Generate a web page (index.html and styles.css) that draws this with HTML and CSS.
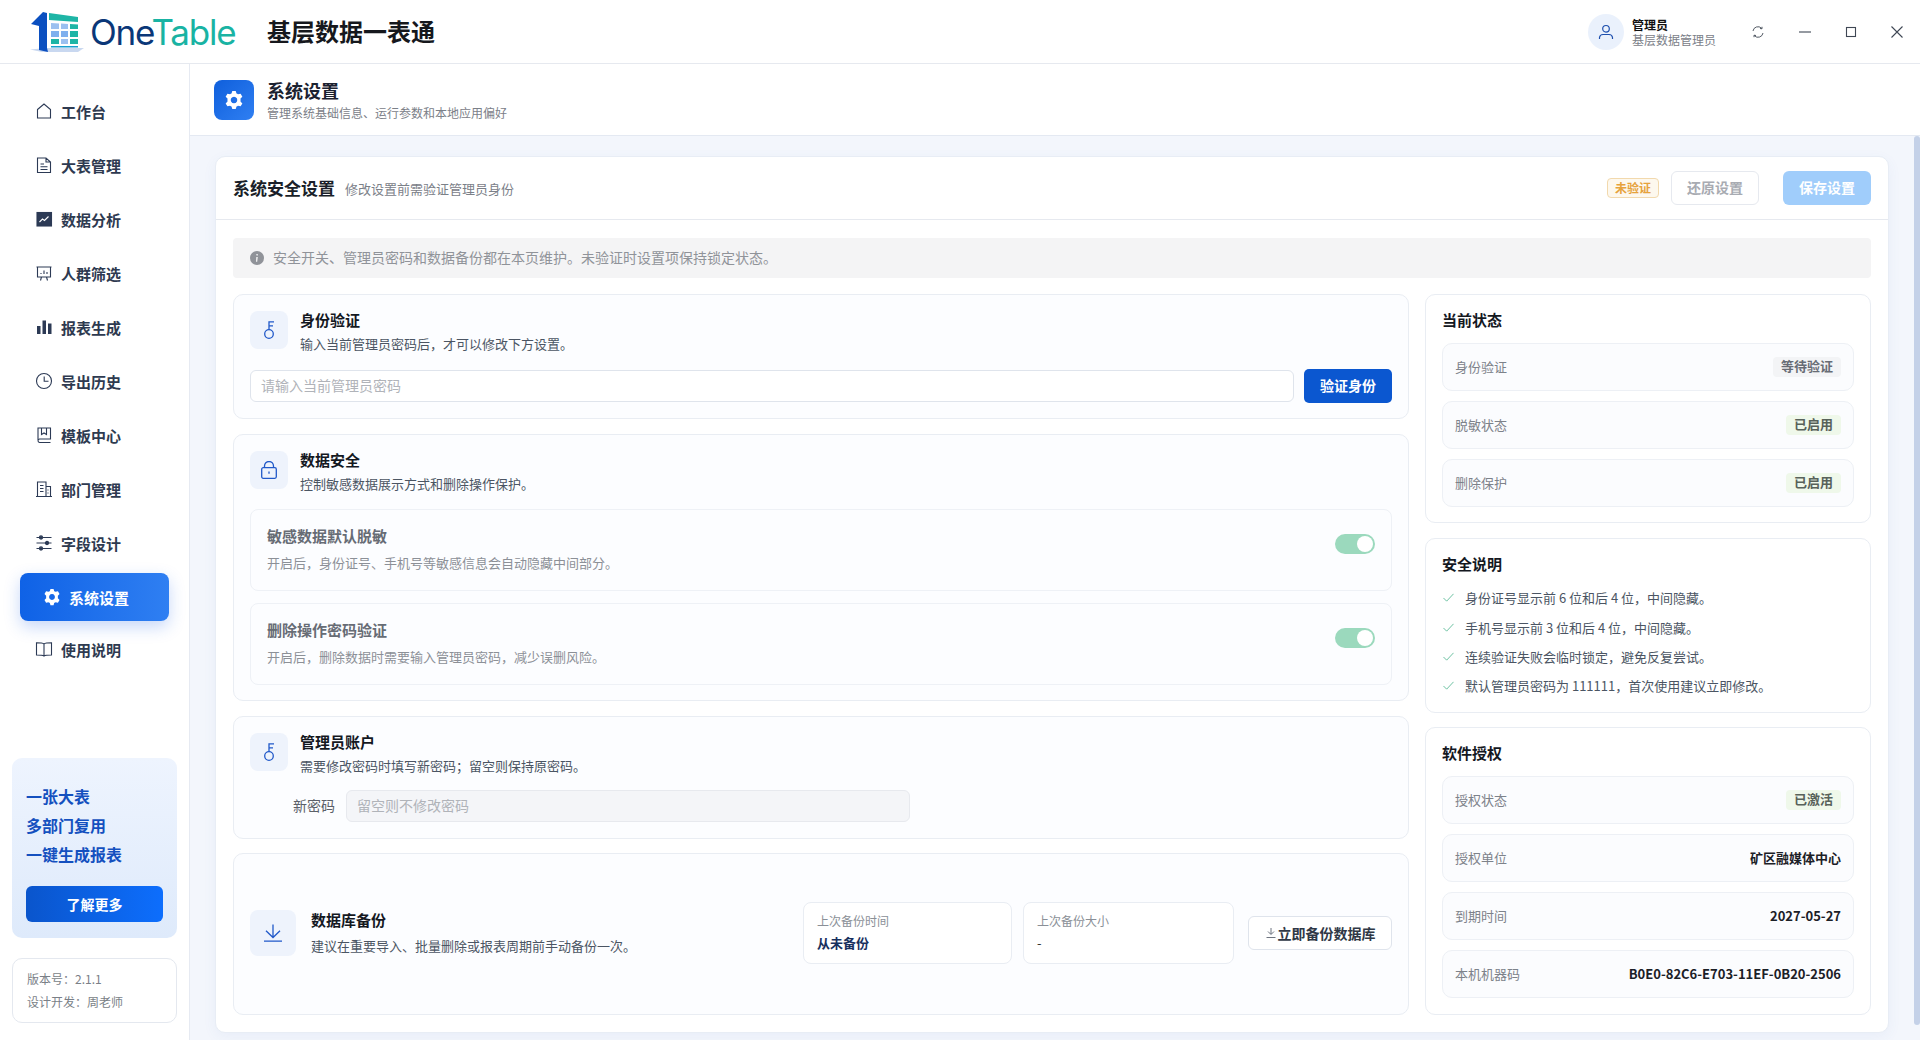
FILE: index.html
```html
<!DOCTYPE html>
<html lang="zh-CN">
<head>
<meta charset="utf-8">
<title>OneTable 基层数据一表通</title>
<link rel="stylesheet" href="styles.css">
</head>
<body>
<header class="topbar">
  <div class="brand">
    <svg class="logo" viewBox="0 0 54 42" aria-hidden="true">
      <path d="M0 38.500 L12 41 L48 41 L54 37 L17 37 Z" fill="#c9d8f0"/>
      <path d="M1 13 L10 4 L13 1 L17 2 L17 37 L18 41 L9 39 L9 15 Z" fill="#0b4fc0"/>
      <path d="M19 2 L48 6 L48 11 L19 9 Z" fill="#1eb5a6"/>
      <path d="M21 12 L29 12.500 L29 18 L21 18 Z M31 12.500 L38 13 L38 18 L31 18 Z" fill="#9cc0f0"/>
      <path d="M40 13 L48 13.500 L48 18 L40 18 Z" fill="#1eb5a6"/>
      <path d="M21 20 L29 20 L29 26 L21 26 Z M31 20 L38 20 L38 26 L31 26 Z" fill="#7fb0ee"/>
      <path d="M40 20 L48 20 L48 26 L40 26 Z" fill="#1eb5a6"/>
      <path d="M21 28 L29 28 L29 33 L21 33 Z M40 28 L48 28 L48 33 L40 33 Z" fill="#1eb5a6"/>
      <path d="M31 28 L38 28 L38 33 L31 33 Z" fill="#9cc0f0"/>
      <path d="M21 35 L48 35 L48 36.500 L21 36.500 Z" fill="#1a9fd0"/>
    </svg>
    <span class="wordmark"><span class="wm-one">One</span><span class="wm-table">Table</span></span>
  </div>
  <h1 class="app-name">基层数据一表通</h1>
  <div class="top-right">
    <div class="avatar">
      <svg viewBox="0 0 16 16" class="ic-user"><circle cx="8" cy="4.800" r="3.300"/><path d="M1.500 15 V13.500 A3.500 3.500 0 0 1 5 10.500 H11 A3.500 3.500 0 0 1 14.500 13.500 V15"/></svg>
    </div>
    <div class="user-text">
      <div class="user-name">管理员</div>
      <div class="user-role">基层数据管理员</div>
    </div>
    <div class="win-btns">
      <svg viewBox="0 0 12 12" class="win win-sm"><path d="M1 5 A5 5 0 0 1 9.500 2.200 M11 7 A5 5 0 0 1 2.500 9.800"/><path d="M8 2.500 L10 2.800 L10 .8 M4 9.500 L2 9.200 L2 11.200"/></svg>
      <svg viewBox="0 0 14 14" class="win"><path d="M1 7 H13"/></svg>
      <svg viewBox="0 0 14 14" class="win win-m"><rect x="2.500" y="2.500" width="9" height="9"/></svg>
      <svg viewBox="0 0 14 14" class="win"><path d="M1.500 1.500 L12.500 12.500 M12.500 1.500 L1.500 12.500"/></svg>
    </div>
  </div>
</header>

<div class="shell">
  <aside class="sidebar">
    <nav class="nav">
      <a class="nav-item"><svg viewBox="0 0 18 18" class="ni"><path d="M2.500 7.500 L9 2 L15.500 7.500 V16 H2.500 Z"/></svg><span>工作台</span></a>
      <a class="nav-item"><svg viewBox="0 0 18 18" class="ni"><path d="M2.500 2 H11 L15.500 6 V16.500 H2.500 Z M11 2 V6 H15.500 M5.500 8 H9 M5.500 10.800 H12.500 M5.500 13.500 H12.500"/></svg><span>大表管理</span></a>
      <a class="nav-item"><svg viewBox="0 0 18 18" class="ni"><rect x="2" y="2.500" width="14.500" height="13.500" fill="#2c3a55"/><path d="M4.500 12 L7.500 9 L9.500 10.500 L13.500 6.500" stroke="#fff"/></svg><span>数据分析</span></a>
      <a class="nav-item"><svg viewBox="0 0 18 18" class="ni"><path d="M1.500 3 H16.500 M2.500 3 V13 H15.500 V3 M6.500 13 L5.500 16.500 M11.500 13 L12.500 16.500 M6 10 V9 M9 10 V6.500 M12 10 V8"/></svg><span>人群筛选</span></a>
      <a class="nav-item"><svg viewBox="0 0 18 18" class="ni ni-fill"><rect x="2" y="8" width="3.500" height="8"/><rect x="7.500" y="2.500" width="3.500" height="13.500"/><rect x="13" y="5.500" width="3.500" height="10.500"/></svg><span>报表生成</span></a>
      <a class="nav-item"><svg viewBox="0 0 18 18" class="ni"><circle cx="9" cy="9" r="7.500"/><path d="M9.200 4.500 V9.200 H13.500"/></svg><span>导出历史</span></a>
      <a class="nav-item"><svg viewBox="0 0 18 18" class="ni"><path d="M3 14 V2 H15.500 V13 H4.500 A1.800 1.800 0 0 0 3 14.800 A1.800 1.800 0 0 0 4.500 16.500 H15.500 M6.500 2 V8.500 L9 7 L11.500 8.500 V2"/></svg><span>模板中心</span></a>
      <a class="nav-item"><svg viewBox="0 0 18 18" class="ni"><path d="M1 16.500 H17 M2.500 16.500 V2 H11 V16.500 M11 6.500 H15.500 V16.500 M5 5.500 H8.500 M5 8.500 H8.500 M5 11.500 H8.500 M13 9.500 V10.500 M13 12.500 V13.500"/></svg><span>部门管理</span></a>
      <a class="nav-item"><svg viewBox="0 0 18 18" class="ni"><path d="M1.500 3.500 H16.500 M1.500 9 H16.500 M1.500 14.500 H16.500"/><circle cx="6" cy="3.500" r="1.600" fill="#2c3a55"/><circle cx="12" cy="9" r="1.600" fill="#2c3a55"/><circle cx="6" cy="14.500" r="1.600" fill="#2c3a55"/></svg><span>字段设计</span></a>
      <a class="nav-item nav-active"><svg viewBox="0 0 1024 1024" class="gear gear-w"><path fill-rule="evenodd" d="M600 50 L640 180 Q680 195 715 220 L850 190 L940 340 L845 440 Q850 512 845 585 L940 685 L850 835 L715 805 Q680 830 640 845 L600 975 H425 L385 845 Q345 830 310 805 L175 835 L85 685 L180 585 Q175 512 180 440 L85 340 L175 190 L310 220 Q345 195 385 180 L425 50 Z M512 345 A167 167 0 1 0 512.100 345 Z"/></svg><span>系统设置</span></a>
      <a class="nav-item"><svg viewBox="0 0 18 18" class="ni"><path d="M9 4 V16 M9 4 C7.500 2.800 4 2.800 1.500 2.800 V15 C4 15 7.500 15 9 16 C10.500 15 14 15 16.500 15 V2.800 C14 2.800 10.500 2.800 9 4 Z"/></svg><span>使用说明</span></a>
    </nav>
    <section class="promo">
      <p>一张大表</p>
      <p>多部门复用</p>
      <p>一键生成报表</p>
      <button class="promo-btn">了解更多</button>
    </section>
    <section class="version">
      <p>版本号：2.1.1</p>
      <p>设计开发：周老师</p>
    </section>
  </aside>

  <main class="main">
    <div class="page-head">
      <div class="page-icon"><svg viewBox="0 0 1024 1024" class="gear gear-p"><path fill-rule="evenodd" d="M600 50 L640 180 Q680 195 715 220 L850 190 L940 340 L845 440 Q850 512 845 585 L940 685 L850 835 L715 805 Q680 830 640 845 L600 975 H425 L385 845 Q345 830 310 805 L175 835 L85 685 L180 585 Q175 512 180 440 L85 340 L175 190 L310 220 Q345 195 385 180 L425 50 Z M512 345 A167 167 0 1 0 512.100 345 Z"/></svg></div>
      <div>
        <div class="page-title">系统设置</div>
        <div class="page-sub">管理系统基础信息、运行参数和本地应用偏好</div>
      </div>
    </div>

    <div class="scroll">
      <div class="card">
        <div class="card-head">
          <span class="card-title">系统安全设置</span>
          <span class="card-sub">修改设置前需验证管理员身份</span>
          <span class="tag-warn">未验证</span>
          <button class="btn-restore">还原设置</button>
          <button class="btn-save">保存设置</button>
        </div>
        <div class="card-body">
          <div class="alert">
            <svg viewBox="0 0 14 14" class="alert-ic"><circle cx="7" cy="7" r="7"/><path d="M7.700 3 L7.900 4.400 L6.500 4.500 L6.300 3.100 Z M6.300 6 H7.800 L7.200 10.800 H6 Z" fill="#f4f4f5"/></svg>
            <span>安全开关、管理员密码和数据备份都在本页维护。未验证时设置项保持锁定状态。</span>
          </div>
          <div class="grid">
            <div class="col col-left">
              <section class="panel">
                <div class="p-head">
                  <div class="p-icon"><svg viewBox="0 0 18 18" class="pi"><circle cx="9" cy="13" r="4.300"/><path d="M9 8.700 V.8 H14 M9 4.800 H13"/></svg></div>
                  <div><h3>身份验证</h3><p>输入当前管理员密码后，才可以修改下方设置。</p></div>
                </div>
                <div class="verify-row">
                  <input class="input" placeholder="请输入当前管理员密码">
                  <button class="btn-primary">验证身份</button>
                </div>
              </section>

              <section class="panel">
                <div class="p-head">
                  <div class="p-icon"><svg viewBox="0 0 18 18" class="pi"><rect x="1.700" y="6.700" width="14.600" height="10.600" rx="1.500"/><path d="M4.500 6.700 V5 A4.500 4.500 0 0 1 13.500 5 V6.700 M9 10.500 V12.800"/></svg></div>
                  <div><h3>数据安全</h3><p>控制敏感数据展示方式和删除操作保护。</p></div>
                </div>
                <div class="switch-list">
                  <div class="switch-row">
                    <div><h4>敏感数据默认脱敏</h4><p>开启后，身份证号、手机号等敏感信息会自动隐藏中间部分。</p></div>
                    <span class="toggle"></span>
                  </div>
                  <div class="switch-row">
                    <div><h4>删除操作密码验证</h4><p>开启后，删除数据时需要输入管理员密码，减少误删风险。</p></div>
                    <span class="toggle"></span>
                  </div>
                </div>
              </section>

              <section class="panel panel-admin">
                <div class="p-head">
                  <div class="p-icon"><svg viewBox="0 0 18 18" class="pi"><circle cx="9" cy="13" r="4.300"/><path d="M9 8.700 V.8 H14 M9 4.800 H13"/></svg></div>
                  <div><h3>管理员账户</h3><p>需要修改密码时填写新密码；留空则保持原密码。</p></div>
                </div>
                <div class="pwd-row">
                  <label>新密码</label>
                  <input class="input input-off" placeholder="留空则不修改密码" disabled>
                </div>
              </section>

              <section class="panel panel-backup">
                <div class="p-icon p-icon-lg"><svg viewBox="0 0 18 18" class="pi"><path d="M9 .5 V13 M2 6.800 L9 13.500 L16 6.800 M0 17.200 H18"/></svg></div>
                <div class="backup-text"><h3>数据库备份</h3><p>建议在重要导入、批量删除或报表周期前手动备份一次。</p></div>
                <div class="stat"><span>上次备份时间</span><b>从未备份</b></div>
                <div class="stat"><span>上次备份大小</span><b class="plain">-</b></div>
                <button class="btn-backup"><svg viewBox="0 0 12 12" class="bi"><path d="M6 1 V7 M3 4.500 L6 7.500 L9 4.500 M1.500 10.500 H10.500"/></svg>立即备份数据库</button>
              </section>
            </div>

            <div class="col col-right">
              <section class="panel">
                <h3 class="side-title">当前状态</h3>
                <div class="rows">
                  <div class="row"><span>身份验证</span><em class="tag tag-gray">等待验证</em></div>
                  <div class="row"><span>脱敏状态</span><em class="tag tag-green">已启用</em></div>
                  <div class="row"><span>删除保护</span><em class="tag tag-green">已启用</em></div>
                </div>
              </section>
              <section class="panel panel-note">
                <h3 class="side-title">安全说明</h3>
                <ul class="notes">
                  <li><svg viewBox="0 0 12 12" class="check"><path d="M.5 6.500 L4 10 L11.500 2"/></svg>身份证号显示前 6 位和后 4 位，中间隐藏。</li>
                  <li><svg viewBox="0 0 12 12" class="check"><path d="M.5 6.500 L4 10 L11.500 2"/></svg>手机号显示前 3 位和后 4 位，中间隐藏。</li>
                  <li><svg viewBox="0 0 12 12" class="check"><path d="M.5 6.500 L4 10 L11.500 2"/></svg>连续验证失败会临时锁定，避免反复尝试。</li>
                  <li><svg viewBox="0 0 12 12" class="check"><path d="M.5 6.500 L4 10 L11.500 2"/></svg>默认管理员密码为 111111，首次使用建议立即修改。</li>
                </ul>
              </section>
              <section class="panel panel-license">
                <h3 class="side-title">软件授权</h3>
                <div class="rows">
                  <div class="row"><span>授权状态</span><em class="tag tag-green">已激活</em></div>
                  <div class="row"><span>授权单位</span><strong>矿区融媒体中心</strong></div>
                  <div class="row"><span>到期时间</span><strong>2027-05-27</strong></div>
                  <div class="row"><span>本机机器码</span><strong>B0E0-82C6-E703-11EF-0B20-2506</strong></div>
                </div>
              </section>
            </div>
          </div>
        </div>
      </div>
    </div>
    <div class="scroll-thumb"></div>
  </main>
</div>
</body>
</html>
```

FILE: styles.css
```css
* { box-sizing: border-box; }
html, body { height: 100%; }
body {
  margin: 0;
  height: 1040px;
  overflow: hidden;
  display: flex;
  flex-direction: column;
  background: #fff;
  color: #1f2937;
  font-family: "Noto Sans CJK SC", "Noto Sans", sans-serif;
  font-size: 13px;
}
h1, h3, h4, p, ul { margin: 0; padding: 0; }
button { font-family: inherit; cursor: pointer; }
em { font-style: normal; }

/* top bar */
.topbar {
  flex: 0 0 64px;
  display: flex;
  align-items: center;
  border-bottom: 1px solid #e6e9ef;
  background: #fff;
  padding-left: 30px;
}
.brand { display: flex; align-items: center; width: 237px; }
.logo { width: 54px; height: 42px; flex: none; margin-top: 1px; }
.wordmark { font-family: Inter, sans-serif; font-size: 35px; font-weight: 400; letter-spacing: -1.200px; margin-left: 6px; line-height: 1; margin-top: 2px; }
.wm-one { color: #0a3778; }
.wm-table { color: #19b3a3; }
.app-name { font-size: 24px; font-weight: 700; color: #16181d; line-height: 1; margin-top: -2px; }
.top-right { margin-left: auto; display: flex; align-items: center; }
.avatar {
  width: 36px; height: 36px; border-radius: 50%;
  background: #eaf1fc;
  display: flex; align-items: center; justify-content: center;
}
.ic-user { width: 16px; height: 16px; fill: none; stroke: #1d4fae; stroke-width: 1.200; }
.user-text { margin-left: 8px; width: 120px; line-height: 15px; font-size: 12px; }
.user-name { font-weight: 600; color: #111; }
.user-role { color: #7b8088; }
.win-btns { display: flex; align-items: center; }
.win { width: 14px; height: 14px; fill: none; stroke: #3f4754; stroke-width: 1.100; margin-left: 32px; }
.win:last-child { margin-right: 16px; }
.win-sm { width: 12px; height: 12px; margin-left: 0; margin-right: 2px; stroke-width: .9; }
.win-m { width: 14px; height: 14px; }

/* shell */
.shell { flex: 1; display: flex; min-height: 0; }
.sidebar {
  flex: 0 0 190px;
  display: flex;
  flex-direction: column;
  border-right: 1px solid #e6eaf2;
  background: #fff;
  padding: 25px 12px 17px;
}
.nav { display: flex; flex-direction: column; gap: 10px; margin: 0 8px; }
.nav-item {
  height: 44px;
  display: flex; align-items: center; gap: 8px;
  padding-left: 15px;
  font-size: 15px; font-weight: 600; color: #2e3a50;
  border-radius: 8px;
}
.ni { width: 18px; height: 18px; fill: none; stroke: #2c3a55; stroke-width: 1.100; flex: none; }
.ni-fill { fill: #2c3a55; stroke: none; }
.gear { flex: none; }
.gear-w { width: 18px; height: 18px; fill: #fff; }
.gear-p { width: 20px; height: 20px; fill: #fff; }
.nav-active {
  height: 48px;
  margin: -2px 0 -4px;
  padding-left: 23px;
  color: #fff;
  background: linear-gradient(90deg, #0f62e6, #2f7ff2);
  box-shadow: 0 6px 16px rgba(30, 100, 230, .25);
}
.promo {
  margin-top: auto;
  height: 180px;
  border-radius: 10px;
  padding: 24px 14px 0;
  background: linear-gradient(180deg, #eef4fe, #deeafb);
  font-size: 16px; font-weight: 700; color: #1450bf;
}
.promo p { line-height: 29px; }
.promo-btn {
  display: block; width: 137px; height: 36px; margin-top: 17px;
  border: 0; border-radius: 6px;
  background: linear-gradient(90deg, #0a55cc, #0d6efd);
  color: #fff; font-size: 14px; font-weight: 700;
}
.version {
  margin-top: 20px; height: 65px;
  border: 1px solid #e4e8ef; border-radius: 10px;
  padding: 8px 14px;
  color: #7a7f87; font-size: 12px; line-height: 23px;
}

/* main */
.main { position: relative; flex: 1; min-width: 0; display: flex; flex-direction: column; background: #f3f6fc; }
.page-head {
  flex: 0 0 72px;
  display: flex; align-items: center; gap: 13px;
  padding-left: 24px;
  background: #fff;
  border-bottom: 1px solid #e4e9f2;
}
.page-icon {
  width: 40px; height: 40px; border-radius: 8px;
  background: linear-gradient(135deg, #0f5fdc, #2f7ff2);
  display: flex; align-items: center; justify-content: center;
}
.page-title { font-size: 18px; font-weight: 600; line-height: 22px; color: #1b2230; margin-top: 1px; }
.page-sub { font-size: 12px; line-height: 18px; color: #7b8088; margin-top: 3px; }
.scroll { flex: 1; min-height: 0; overflow: hidden; padding: 20px 31px 0 25px; }
.scroll-thumb { position: absolute; top: 72px; right: 0; width: 6px; height: 889px; border-radius: 3px; background: #c4d1e8; }

.card {
  background: #fff;
  border: 1px solid #e8edf5;
  border-radius: 10px;
  box-shadow: 0 4px 14px rgba(60, 100, 190, .06);
}
.card-head {
  height: 63px;
  display: flex; align-items: center;
  padding: 0 17px 0 18px;
  border-bottom: 1px solid #e6e9ef;
}
.card-title { font-size: 17px; font-weight: 700; color: #1a1f29; margin-top: -2px; margin-left: -1px; }
.card-sub { font-size: 13px; color: #7b8088; margin-left: 10px; }
.tag-warn {
  margin-left: auto;
  width: 52px; height: 20px; line-height: 18px; text-align: center;
  border: 1px solid #f2d9ad; border-radius: 4px; background: #fdf8ee;
  color: #e6a23c; font-size: 12px; font-weight: 700;
}
.btn-restore, .btn-save { width: 88px; height: 34px; border-radius: 6px; font-size: 14px; font-weight: 700; padding: 0 0 2px; }
.btn-restore { margin-left: 12px; border: 1px solid #e6e9ef; background: #fff; color: #a8abb2; }
.btn-save { margin-left: 24px; border: 0; background: #a0cdfb; color: #fff; }
.card-body { padding: 18px 17px 17px; }
.alert {
  height: 40px; display: flex; align-items: center; gap: 9px;
  padding-left: 17px;
  border-radius: 4px; background: #f4f4f5;
  color: #909399; font-size: 14px;
}
.alert span { margin-top: -2px; }
.alert-ic { width: 14px; height: 14px; fill: #909399; flex: none; }
.grid { display: grid; grid-template-columns: 1176px 1fr; gap: 16px; margin-top: 16px; }
.col { display: flex; flex-direction: column; }
.col-left { gap: 14.800px; }
.col-right { gap: 14.670px; }

.panel { border: 1px solid #e9edf3; border-radius: 10px; background: #fcfdff; padding: 16px 16px 15px; }
.panel-admin { padding-bottom: 16px; }
.panel-license { padding-bottom: 16px; }
.p-head { display: flex; gap: 12px; }
.p-head h3, .backup-text h3 { font-size: 15px; font-weight: 700; line-height: 20px; color: #14181f; margin-top: -1px; }
.p-head p, .backup-text p { font-size: 13px; line-height: 20px; color: #4b5563; margin-top: 4px; }
.backup-text p { margin-top: 6px; }
.p-icon {
  width: 38px; height: 38px; flex: none; border-radius: 8px;
  background: #eef3fc;
  display: flex; align-items: center; justify-content: center;
}
.pi { width: 18px; height: 18px; fill: none; stroke: #2159c9; stroke-width: 1.300; }
.p-icon-lg { width: 46px; height: 46px; }
.verify-row { display: flex; gap: 10px; align-items: center; margin-top: 15px; height: 34px; }
.input {
  flex: 1; height: 32px; min-width: 0;
  border: 1px solid #dfe4ec; border-radius: 6px;
  padding: 0 10px 2px; background: #fff;
  font: 14px "Noto Sans CJK SC", sans-serif; outline: none;
}
.input::placeholder { color: #b0b3b9; }
.btn-primary { width: 88px; height: 34px; border: 0; border-radius: 5px; background: #0b57d0; color: #fff; font-size: 14px; font-weight: 700; padding: 0 0 2px; }
.switch-list { display: flex; flex-direction: column; gap: 12px; margin-top: 15px; }
.switch-row {
  height: 82px; display: flex; align-items: center; justify-content: space-between;
  padding: 0 16px 0 16px;
  border: 1px solid #eef1f6; border-radius: 8px;
}
.switch-row h4 { font-size: 15px; font-weight: 600; line-height: 20px; color: #676c75; }
.switch-row p { font-size: 13px; line-height: 20px; color: #8c9097; margin-top: 7px; }
.toggle { position: relative; width: 40px; height: 20px; border-radius: 10px; background: #9bd9bd; margin-bottom: 12px; }
.toggle::after { content: ""; position: absolute; top: 2px; right: 2px; width: 16px; height: 16px; border-radius: 50%; background: #fff; }
.pwd-row { display: flex; align-items: center; gap: 11px; margin-top: 14px; padding-left: 43px; }
.pwd-row label { font-size: 14px; color: #5b6068; margin-top: -2px; }
.pwd-row .input { flex: 0 0 564px; background: #f4f5f8; border-color: #e7e9ee; }
.panel-backup { flex: 1; display: flex; align-items: center; padding: 15px 16px 17px; }
.backup-text { margin-left: 15px; width: 492px; }
.backup-text h3 { margin-top: 0; }
.stat {
  width: 209px; height: 62px;
  padding: 8px 13px;
  border: 1px solid #e9edf3; border-radius: 8px; background: #fff;
  display: flex; flex-direction: column;
}
.stat + .stat { margin-left: 11px; width: 211px; }
.stat span { font-size: 12px; line-height: 20px; color: #8a8f97; }
.stat b { font-size: 13px; font-weight: 700; color: #17305e; line-height: 20px; margin-top: 2px; }
.stat b.plain { font-weight: 400; color: #333; }
.btn-backup {
  margin-left: 14px; width: 144px; height: 34px;
  display: flex; align-items: center; justify-content: center;
  border: 1px solid #dfe4ec; border-radius: 6px; background: #fff;
  color: #303846; font-size: 14px; font-weight: 600; padding: 0;
}
.bi { width: 12px; height: 12px; fill: none; stroke: #4a5260; stroke-width: .8; margin-right: 1px; }

.col-right .panel { background: #fff; }
.side-title { font-size: 15px; font-weight: 700; line-height: 20px; color: #14181f; margin-top: -1px; }
.rows { display: flex; flex-direction: column; gap: 10px; margin-top: 13px; }
.row {
  height: 48px; display: flex; align-items: center; justify-content: space-between;
  padding: 0 12px 2px;
  border: 1px solid #edf0f5; border-radius: 10px; background: #fbfcfe;
  color: #7d828a; font-size: 13px;
}
.row strong { font-size: 13px; font-weight: 600; color: #1b2027; }
.tag { height: 20px; line-height: 18px; margin-top: 2px; padding: 0 8px; border-radius: 4px; font-size: 13px; font-weight: 600; }
.tag-gray { background: #f3f4f6; color: #676c75; }
.tag-green { background: #eff8ea; color: #58625a; }
.panel-note { padding-bottom: 11.200px; }
.notes { list-style: none; margin-top: 9.500px; }
.notes li { display: flex; align-items: center; height: 29.330px; color: #4b5563; font-size: 13px; }
.check { width: 11px; height: 11px; fill: none; stroke: #4fb58f; stroke-width: .9; margin: 0 11px 0 1px; flex: none; }
```
